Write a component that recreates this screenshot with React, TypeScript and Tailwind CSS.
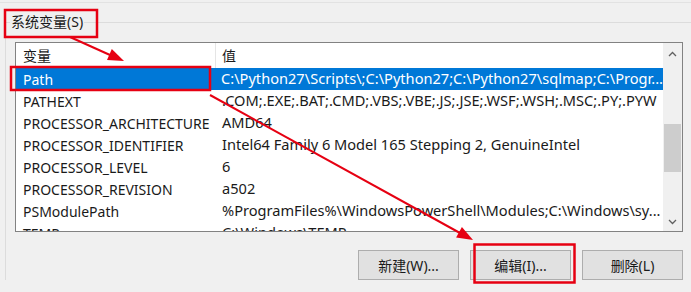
const rows: { name: string; value: string }[] = [
	{ name: "Path", value: "C:\\Python27\\Scripts\\;C:\\Python27;C:\\Python27\\sqlmap;C:\\Progr..." },
	{ name: "PATHEXT", value: ".COM;.EXE;.BAT;.CMD;.VBS;.VBE;.JS;.JSE;.WSF;.WSH;.MSC;.PY;.PYW" },
	{ name: "PROCESSOR_ARCHITECTURE", value: "AMD64" },
	{ name: "PROCESSOR_IDENTIFIER", value: "Intel64 Family 6 Model 165 Stepping 2, GenuineIntel" },
	{ name: "PROCESSOR_LEVEL", value: "6" },
	{ name: "PROCESSOR_REVISION", value: "a502" },
	{ name: "PSModulePath", value: "%ProgramFiles%\\WindowsPowerShell\\Modules;C:\\Windows\\sy..." },
	{ name: "TEMP", value: "C:\\Windows\\TEMP" },
];

function Chevron({ up }: { up?: boolean }) {
	return (
		<svg width="9" height="6" viewBox="0 0 9 6">
			<polyline
				points={up ? "1,5 4.5,1.5 8,5" : "1,1 4.5,4.5 8,1"}
				fill="none"
				stroke="#606060"
				strokeWidth="1.3"
			/>
		</svg>
	);
}

export default function App() {
	return (
		<div className="relative w-[691px] h-[292px] overflow-hidden bg-[#f0f0f0] text-[14px] text-[#1a1a1a] font-['Noto_Sans','Noto_Sans_CJK_SC',sans-serif]">
			<div className="mt-[2px] border-t border-[#e2e2e2]" />

			{/* group box */}
			<div className="relative ml-[5px] mt-[19px] border-l border-t border-[#dcdcdc]">
				<span className="absolute -top-[12px] left-[4px] bg-[#f0f0f0] px-[1px] leading-[22px]">
					系统变量(S)
				</span>

				<div className="ml-[9px] mt-[19px] flex h-[190px] w-[668px] border border-[#828282] bg-white">
					<div className="flex-1 overflow-hidden">
						<div className="flex h-[25px] items-center">
							<div className="h-full w-[200px] border-r border-[#e5e5e5] pl-[7px] leading-[26px]">
								变量
							</div>
							<div className="pl-[6px] leading-[26px]">值</div>
						</div>
						{rows.map((row, i) => (
							<div
								key={row.name}
								className={
									i === 0
										? "flex h-[22px] items-center whitespace-nowrap bg-[#0078d7] text-white"
										: "flex h-[22px] items-center whitespace-nowrap"
								}
							>
								<div className="w-[200px] pl-[7px]">{row.name}</div>
								<div className="pl-[6px] text-[14.6px]">{row.value}</div>
							</div>
						))}
					</div>
					<div className="flex w-[19px] flex-col items-center bg-[#f0f0f0]">
						<div className="flex h-[22px] items-center justify-center">
							<Chevron up />
						</div>
						<div className="mt-[59px] h-[48px] w-[17px] bg-[#cdcdcd]" />
						<div className="mt-auto flex h-[18px] items-center justify-center">
							<Chevron />
						</div>
					</div>
				</div>

				<div className="mt-[18px] flex justify-end gap-[11px] pr-[8px]">
					{["新建(W)...", "编辑(I)...", "删除(L)"].map((label) => (
						<button
							key={label}
							className="h-[30px] w-[101px] border border-[#adadad] bg-[#e1e1e1] text-[14px]"
						>
							{label}
						</button>
					))}
				</div>
			</div>

			{/* annotations */}
			<svg className="pointer-events-none absolute left-0 top-0" width="691" height="292">
				<rect x="5" y="10" width="92" height="27" fill="none" stroke="#e60012" strokeWidth="2.5" />
				<rect x="11" y="67" width="199" height="23" fill="none" stroke="#e60012" strokeWidth="2.5" />
				<rect x="474.5" y="244.5" width="100" height="38" fill="none" stroke="#e60012" strokeWidth="2.5" />
				<line x1="70" y1="37" x2="110" y2="55" stroke="#e60012" strokeWidth="2" />
				<polygon points="124,61 111.8,49 107,60" fill="#e60012" />
				<line x1="210" y1="95" x2="460" y2="233" stroke="#e60012" strokeWidth="2" />
				<polygon points="473,240 461.9,227 456.1,237.6" fill="#e60012" />
			</svg>
		</div>
	);
}
